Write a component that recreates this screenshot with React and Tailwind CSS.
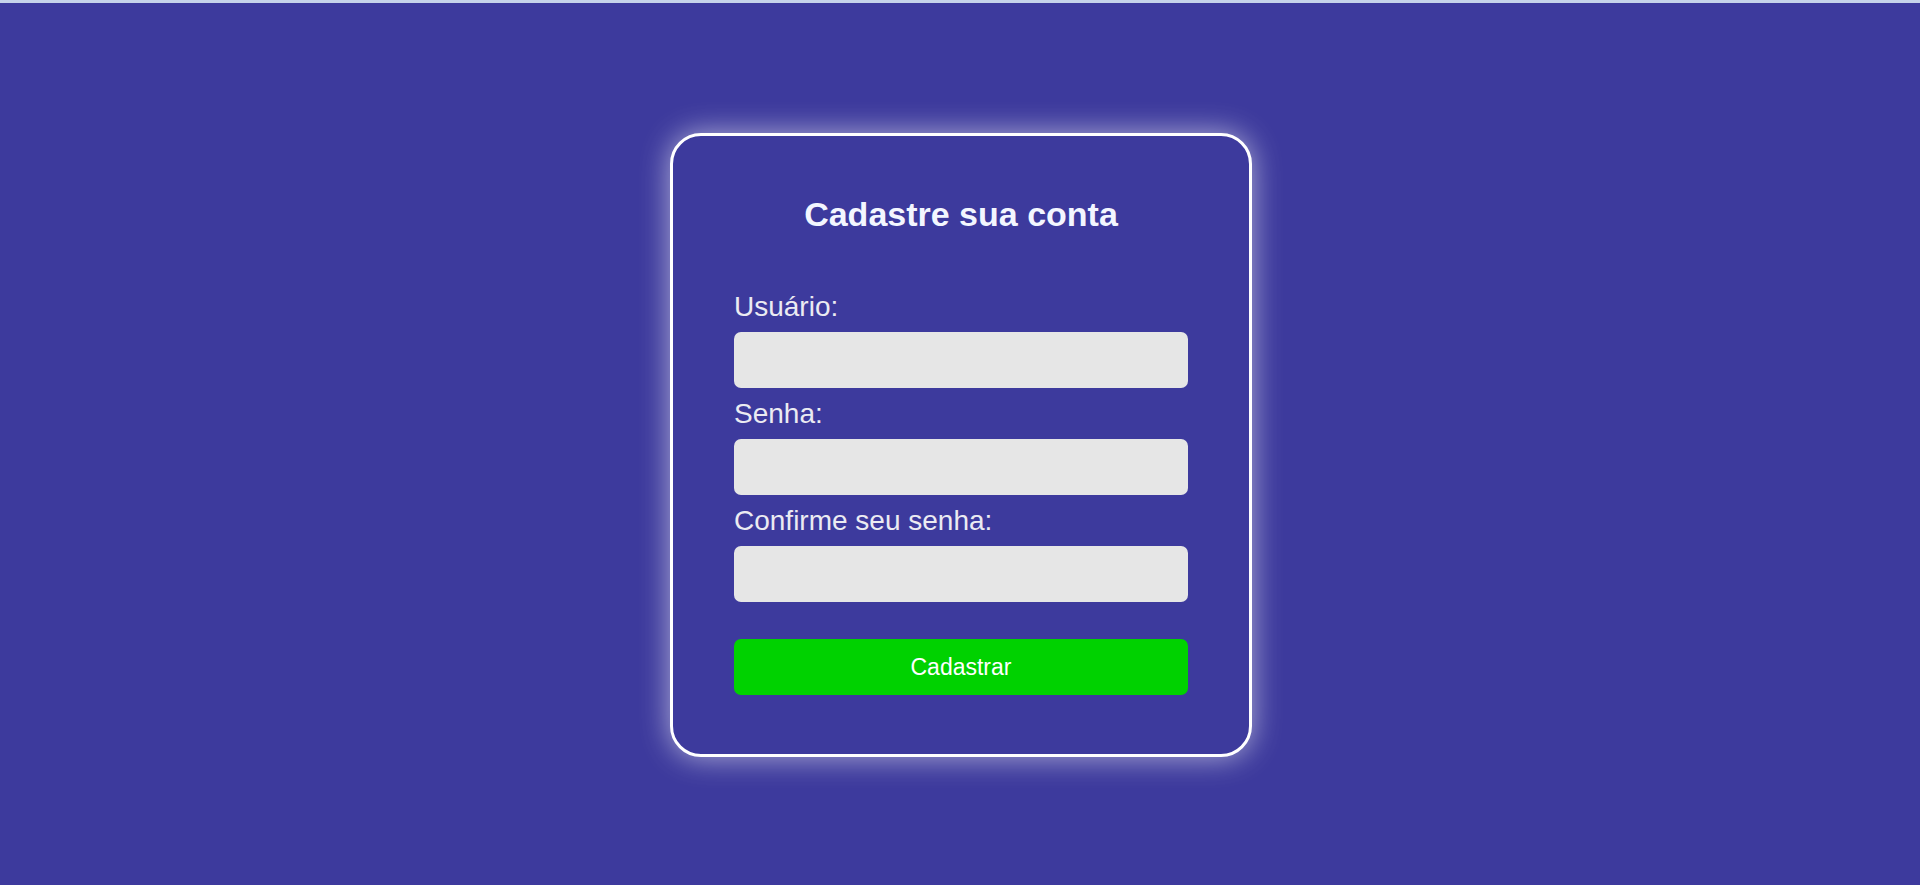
export default function App() {
  const font = { fontFamily: '"Liberation Sans", Arial, sans-serif' };
  return (
    <div className="w-full h-screen overflow-hidden bg-[#3d3a9d]" style={font}>
      <div className="h-[3px] bg-[#c6d3ea]" />
      <div className="flex justify-center pt-[130px] pl-[2px]">
        <div className="w-[582px] border-[3px] border-white rounded-[31px] bg-[#3d3a9d] shadow-[0_0_30px_rgba(255,255,255,0.6)] pt-[58px] pb-[59px] px-[61px] flex flex-col">
          <h2 className="h-[40px] leading-[40px] text-[34px] font-bold text-center text-[#f3f6ff] mb-[57px]">
            Cadastre sua conta
          </h2>
          <label className="block h-[32px] leading-[32px] text-[28px] text-[#ebebf2] mb-[9px]">Usuário:</label>
          <input type="text" className="h-[56px] w-full rounded-[7px] bg-[#e6e6e6] outline-none border-0" />
          <label className="block h-[32px] leading-[32px] text-[28px] text-[#ebebf2] mt-[10px] mb-[9px]">Senha:</label>
          <input type="password" className="h-[56px] w-full rounded-[7px] bg-[#e6e6e6] outline-none border-0" />
          <label className="block h-[32px] leading-[32px] text-[28px] text-[#ebebf2] mt-[10px] mb-[9px]">Confirme seu senha:</label>
          <input type="password" className="h-[56px] w-full rounded-[7px] bg-[#e6e6e6] outline-none border-0" />
          <button className="mt-[37px] h-[56px] w-full rounded-[7px] bg-[#00d200] text-white text-[23px]" style={font}>
            Cadastrar
          </button>
        </div>
      </div>
    </div>
  );
}
